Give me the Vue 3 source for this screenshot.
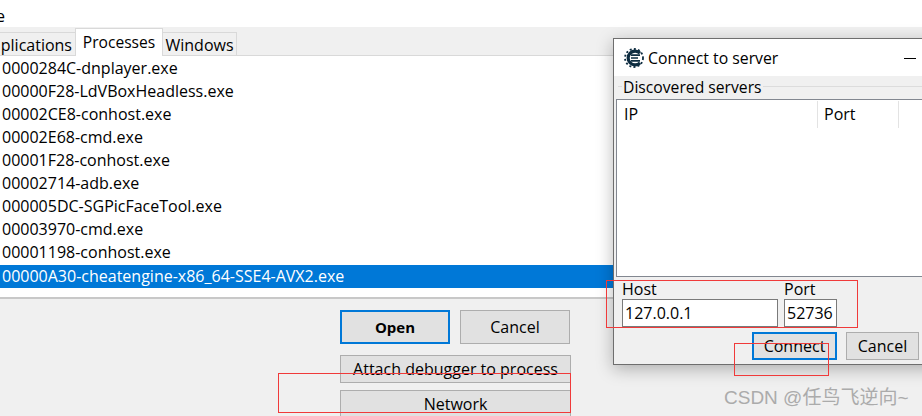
<script setup>
const rows = [
  '0000284C-dnplayer.exe',
  '00000F28-LdVBoxHeadless.exe',
  '00002CE8-conhost.exe',
  '00002E68-cmd.exe',
  '00001F28-conhost.exe',
  '00002714-adb.exe',
  '000005DC-SGPicFaceTool.exe',
  '00003970-cmd.exe',
  '00001198-conhost.exe',
  '00000A30-cheatengine-x86_64-SSE4-AVX2.exe'
]
</script>

<template>
  <div class="page">
    <div class="topbar"><span class="topbar-text">e</span></div>
    <div class="tabs">
      <div class="tab first"><span class="first-text">plications</span></div>
      <div class="tab active">Processes</div>
      <div class="tab">Windows</div>
    </div>
    <div class="list">
      <div
        v-for="(r, i) in rows"
        :key="r"
        class="row"
        :class="{ selected: i === rows.length - 1 }"
      >{{ r }}</div>
    </div>
    <div class="actions">
      <div class="action-pair">
        <button class="btn primary">Open</button>
        <button class="btn">Cancel</button>
      </div>
      <button class="btn wide attach">Attach debugger to process</button>
      <button class="btn wide network">Network</button>
    </div>

    <div class="dialog">
      <div class="title">
        <svg class="logo" width="20" height="20" viewBox="0 0 20 20">
          <path d="M16 5.2A6.9 6.9 0 1 0 16 14.8" fill="none" stroke="#0d2c40" stroke-width="3.2"/>
          <circle cx="10" cy="10" r="9" fill="none" stroke="#0d2c40" stroke-width="1.8" stroke-dasharray="2 2.2"/>
          <path d="M7 7.2h9M7 10h7M7 12.8h9" stroke="#0d2c40" stroke-width="1.7" fill="none"/>
        </svg>
        <span class="title-text">Connect to server</span>
        <span class="minimize"></span>
      </div>
      <div class="body">
        <div class="group">
          <span class="group-label">Discovered servers</span>
        </div>
        <div class="servers">
          <div class="server-head">
            <span class="col col-ip">IP</span>
            <span class="col col-port">Port</span>
            <span class="col col-rest"></span>
          </div>
        </div>
        <div class="fields">
          <label class="field">
            <span>Host</span>
            <span class="input host">127.0.0.1</span>
          </label>
          <label class="field">
            <span>Port</span>
            <span class="input port">52736</span>
          </label>
        </div>
        <div class="dialog-actions">
          <button class="btn connect">Connect</button>
          <button class="btn dlg-cancel">Cancel</button>
        </div>
      </div>
    </div>

    <div class="mark mark-host"></div>
    <div class="mark mark-connect"></div>
    <div class="mark mark-network"></div>
    <div class="watermark">CSDN @任鸟飞逆向~</div>
  </div>
</template>

<style>
html, body { margin: 0; padding: 0; background: #f0f0f0; }
</style>

<style scoped>
.page {
  position: relative;
  width: 922px;
  height: 416px;
  overflow: hidden;
  background: #f0f0f0;
  font-family: "Open Sans", "Noto Sans", sans-serif;
  font-size: 16px;
  color: #000;
}
.topbar {
  height: 27px;
  background: #fff;
  line-height: 32px;
  overflow: hidden;
}
.topbar-text { margin-left: -4px; }
.tabs {
  height: 29px;
  display: flex;
  align-items: flex-end;
  position: relative;
  z-index: 1;
}
.tab {
  height: 24px;
  line-height: 24px;
  box-sizing: border-box;
  border: 1px solid #d9d9d9;
  border-bottom: none;
  width: 75px;
  text-align: center;
  margin-right: -1px;
  white-space: nowrap;
}
.tab.first {
  width: 76px;
  border-left: none;
  overflow: hidden;
  display: flex;
  justify-content: flex-end;
  padding-right: 3px;
}
.first-text { flex: none; }
.tab.active {
  height: 28px;
  width: 88px;
  background: #fff;
  line-height: 26px;
  font-size: 15.6px;
  position: relative;
  z-index: 2;
}
.list {
  height: 240px;
  padding-top: 1px;
  background: #fff;
  border-top: 1px solid #d9d9d9;
  border-bottom: 2px solid #c8c8c8;
  margin-top: -1px;
}
.row {
  height: 23px;
  line-height: 23px;
  padding-left: 2px;
  white-space: nowrap;
}
.row.selected {
  margin-top: 1px;
  background: #0078d7;
  color: #fff;
}
.actions {
  width: 230px;
  margin-left: 340px;
  padding-top: 11px;
}
.action-pair {
  display: flex;
  justify-content: space-between;
}
.btn {
  display: block;
  box-sizing: border-box;
  background: #e1e1e1;
  border: 1px solid #adadad;
  font: inherit;
  color: #000;
  padding: 0;
  height: 34px;
  width: 110px;
}
.btn.primary {
  width: 110px;
  border: 2px solid #0078d7;
  font-weight: 700;
  font-size: 15px;
}
.btn.wide { width: 231px; }
.attach { height: 28px; margin-top: 11px; }
.network { height: 40px; margin-top: 7px; padding-bottom: 12px; line-height: 24px; }

.dialog {
  position: absolute;
  z-index: 3;
  left: 613px;
  top: 38px;
  width: 330px;
  height: 327px;
  box-sizing: border-box;
  border: 1px solid #6e6e6e;
  box-shadow: 0 4px 16px rgba(0, 0, 0, .28);
  background: #f0f0f0;
}
.title {
  height: 37px;
  background: #fff;
  display: flex;
  align-items: center;
  padding-left: 10px;
  position: relative;
}
.logo { flex: none; }
.title-text { margin-left: 4px; font-size: 15.8px; }
.minimize {
  position: absolute;
  left: 290px;
  top: 19px;
  width: 12px;
  height: 1px;
  background: #000;
}
.body { padding: 0 2px; }
.group {
  height: 23px;
  position: relative;
}
.group::before {
  content: "";
  position: absolute;
  left: 2px;
  right: 0;
  top: 10px;
  height: 1px;
  background: #dcdcdc;
}
.group-label {
  position: absolute;
  left: 6px;
  top: 1px;
  line-height: 20px;
  font-size: 15.7px;
  background: #f0f0f0;
  padding: 0 1px;
}
.servers {
  height: 178px;
  background: #fff;
  border: 1px solid #828790;
  box-sizing: border-box;
  margin-right: -30px;
}
.server-head {
  display: flex;
  height: 27px;
  padding-top: 1px;
}
.col {
  box-sizing: border-box;
  line-height: 26px;
  border-right: 1px solid #e3e3e3;
}
.col-ip { width: 201px; padding-left: 7px; }
.col-port { width: 81px; padding-left: 6px; }
.col-rest { border-right: none; }
.fields {
  display: flex;
  gap: 6px;
  padding-left: 6px;
  margin-top: 3px;
}
.field {
  display: flex;
  flex-direction: column;
}
.field > span:first-child { line-height: 19px; }
.input {
  display: block;
  box-sizing: border-box;
  height: 28px;
  line-height: 26px;
  background: #fff;
  border: 1px solid #7a7a7a;
  padding-left: 2px;
}
.host { width: 156px; }
.port { width: 53px; white-space: nowrap; overflow: hidden; }
.dialog-actions {
  display: flex;
  gap: 9px;
  margin-top: 5px;
  padding-left: 136px;
}
.connect {
  width: 85px;
  height: 28px;
  border: 2px solid #0078d7;
}
.dlg-cancel {
  width: 73px;
  height: 28px;
}

.mark {
  position: absolute;
  z-index: 4;
  border: 1px solid #f03a3a;
  box-sizing: border-box;
  pointer-events: none;
}
.mark-host { left: 606px; top: 280px; width: 252px; height: 48px; }
.mark-connect { left: 734px; top: 343px; width: 95px; height: 33px; }
.mark-network { left: 278px; top: 373px; width: 293px; height: 40px; }
.watermark {
  position: absolute;
  z-index: 4;
  left: 724px;
  top: 386px;
  font-family: "Liberation Sans", "Noto Sans CJK SC", sans-serif;
  font-size: 19px;
  line-height: 24px;
  color: #ababab;
  white-space: nowrap;
}
</style>
